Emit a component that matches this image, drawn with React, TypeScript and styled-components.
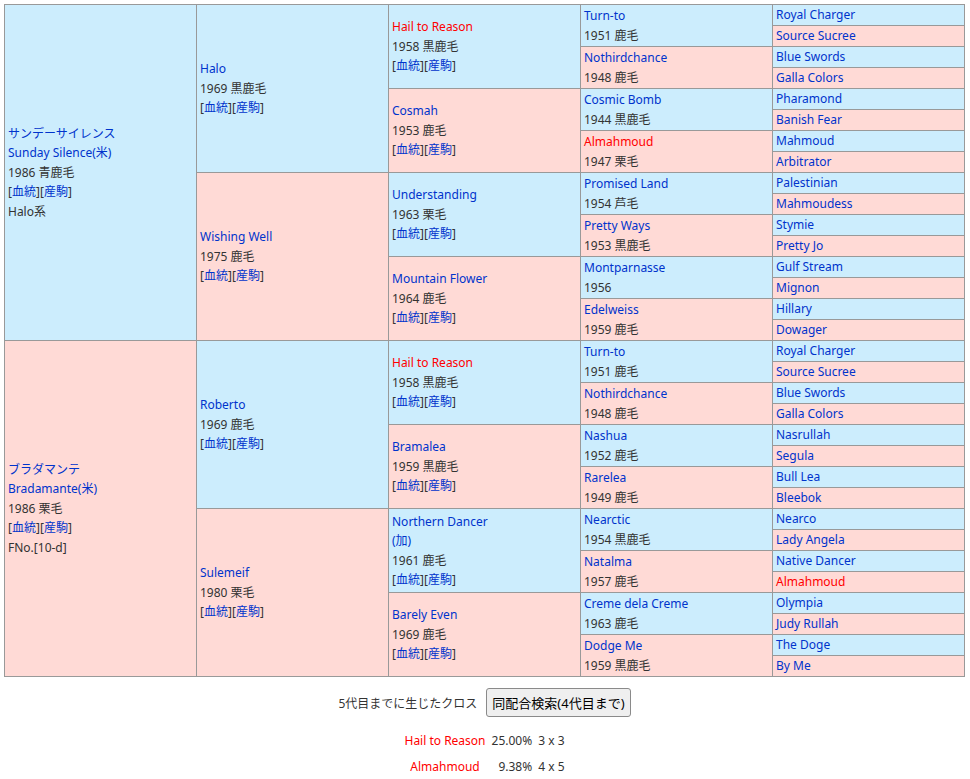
import React from 'react'
import styled, { createGlobalStyle } from 'styled-components'

const GlobalStyle = createGlobalStyle`
    body {
        margin: 0;
        background: #fff;
        color: #333;
        font-family: "Noto Sans", "Noto Sans CJK JP", sans-serif;
        font-size: 12px;
    }
`

const Page = styled.div`
    padding: 4px;
    width: 961px;
`

const PedigreeGrid = styled.div`
    display: grid;
    grid-template-columns: repeat(5, 191px);
    grid-template-rows: repeat(32, 20px);
    gap: 1px;
    padding: 1px;
    background: #999;
`

const Cell = styled.div<{ $col: number; $row: number; $span: number; $female: boolean }>`
    grid-column: ${p => p.$col};
    grid-row: ${p => p.$row} / span ${p => p.$span};
    background: ${p => (p.$female ? '#ffdad6' : '#ccedfd')};
    padding: 0 3px;
    display: flex;
    flex-direction: column;
    justify-content: center;
    line-height: 19.5px;
    white-space: nowrap;
    overflow: hidden;
`

const HorseLink = styled.a<{ $cross?: boolean }>`
    color: ${p => (p.$cross ? '#ff0000' : '#0033cc')};
    text-decoration: none;
`

const Line = styled.div`
    color: #333;
`

const SubLink = styled.a`
    color: #0033cc;
    text-decoration: none;
`

const CrossBar = styled.div`
    display: flex;
    justify-content: center;
    align-items: center;
    gap: 9px;
    margin-top: 11px;
    font-size: 12px;
    color: #333;
`

const SearchButton = styled.button`
    height: 29px;
    padding: 0 5px;
    font-family: "Noto Sans", "Noto Sans CJK JP", sans-serif;
    font-size: 13px;
    color: #000;
    background: #efefef;
    border: 1px solid #8a8a8a;
    border-radius: 3px;
`

const CrossTable = styled.table`
    margin: 10px auto 0;
    border-collapse: collapse;
    font-size: 12px;
`

const CrossCell = styled.td<{ $align: 'left' | 'center' | 'right' }>`
    height: 26px;
    padding: 0 3px;
    text-align: ${p => p.$align};
    color: #333;
    white-space: pre;
`

const CrossName = styled.span`
    color: #ff0000;
`

type Horse = {
    name: string
    kana?: string
    origin?: string
    year?: string
    coat?: string
    links?: boolean
    extra?: string
    cross?: boolean
}

const gen1: Horse[] = [
    { kana: 'サンデーサイレンス', name: 'Sunday Silence', origin: '(米)', year: '1986', coat: '青鹿毛', links: true, extra: 'Halo系' },
    { kana: 'ブラダマンテ', name: 'Bradamante', origin: '(米)', year: '1986', coat: '栗毛', links: true, extra: 'FNo.[10-d]' },
]

const gen2: Horse[] = [
    { name: 'Halo', year: '1969', coat: '黒鹿毛', links: true },
    { name: 'Wishing Well', year: '1975', coat: '鹿毛', links: true },
    { name: 'Roberto', year: '1969', coat: '鹿毛', links: true },
    { name: 'Sulemeif', year: '1980', coat: '栗毛', links: true },
]

const gen3: Horse[] = [
    { name: 'Hail to Reason', year: '1958', coat: '黒鹿毛', links: true, cross: true },
    { name: 'Cosmah', year: '1953', coat: '鹿毛', links: true },
    { name: 'Understanding', year: '1963', coat: '栗毛', links: true },
    { name: 'Mountain Flower', year: '1964', coat: '鹿毛', links: true },
    { name: 'Hail to Reason', year: '1958', coat: '黒鹿毛', links: true, cross: true },
    { name: 'Bramalea', year: '1959', coat: '黒鹿毛', links: true },
    { name: 'Northern Dancer', origin: '(加)', year: '1961', coat: '鹿毛', links: true },
    { name: 'Barely Even', year: '1969', coat: '鹿毛', links: true },
]

const gen4: Horse[] = [
    { name: 'Turn-to', year: '1951', coat: '鹿毛' },
    { name: 'Nothirdchance', year: '1948', coat: '鹿毛' },
    { name: 'Cosmic Bomb', year: '1944', coat: '黒鹿毛' },
    { name: 'Almahmoud', year: '1947', coat: '栗毛', cross: true },
    { name: 'Promised Land', year: '1954', coat: '芦毛' },
    { name: 'Pretty Ways', year: '1953', coat: '黒鹿毛' },
    { name: 'Montparnasse', year: '1956' },
    { name: 'Edelweiss', year: '1959', coat: '鹿毛' },
    { name: 'Turn-to', year: '1951', coat: '鹿毛' },
    { name: 'Nothirdchance', year: '1948', coat: '鹿毛' },
    { name: 'Nashua', year: '1952', coat: '鹿毛' },
    { name: 'Rarelea', year: '1949', coat: '鹿毛' },
    { name: 'Nearctic', year: '1954', coat: '黒鹿毛' },
    { name: 'Natalma', year: '1957', coat: '鹿毛' },
    { name: 'Creme dela Creme', year: '1963', coat: '鹿毛' },
    { name: 'Dodge Me', year: '1959', coat: '黒鹿毛' },
]

const gen5: Horse[] = [
    'Royal Charger', 'Source Sucree', 'Blue Swords', 'Galla Colors',
    'Pharamond', 'Banish Fear', 'Mahmoud', 'Arbitrator',
    'Palestinian', 'Mahmoudess', 'Stymie', 'Pretty Jo',
    'Gulf Stream', 'Mignon', 'Hillary', 'Dowager',
    'Royal Charger', 'Source Sucree', 'Blue Swords', 'Galla Colors',
    'Nasrullah', 'Segula', 'Bull Lea', 'Bleebok',
    'Nearco', 'Lady Angela', 'Native Dancer', 'Almahmoud',
    'Olympia', 'Judy Rullah', 'The Doge', 'By Me',
].map((name, i) => ({ name, cross: i === 27 }))

const generations = [gen1, gen2, gen3, gen4, gen5]

const crosses = [
    { name: 'Hail to Reason', pct: '25.00%', gen: '3 x 3' },
    { name: 'Almahmoud', pct: '9.38%', gen: '4 x 5' },
]

const HorseCell: React.FC<{ horse: Horse; col: number; index: number }> = ({ horse, col, index }) => {
    const span = 32 / Math.pow(2, col)
    const { kana, name, origin, year, coat, links, extra, cross } = horse
    return (
        <Cell $col={col} $row={index * span + 1} $span={span} $female={index % 2 === 1}>
            {kana && <HorseLink href="#">{kana}</HorseLink>}
            <div>
                <HorseLink href="#" $cross={cross}>{name}</HorseLink>
                {kana && origin && <HorseLink href="#">{origin}</HorseLink>}
            </div>
            {!kana && origin && <HorseLink href="#">{origin}</HorseLink>}
            {year && <Line>{year}{coat ? ` ${coat}` : ''}</Line>}
            {links && (
                <Line>
                    [<SubLink href="#">血統</SubLink>][<SubLink href="#">産駒</SubLink>]
                </Line>
            )}
            {extra && <Line>{extra}</Line>}
        </Cell>
    )
}

const App: React.FC = () => {
    return (
        <Page>
            <GlobalStyle />
            <PedigreeGrid>
                {generations.map((list, g) =>
                    list.map((horse, i) => (
                        <HorseCell key={`${g}-${i}`} horse={horse} col={g + 1} index={i} />
                    ))
                )}
            </PedigreeGrid>
            <CrossBar>
                <span>5代目までに生じたクロス</span>
                <SearchButton>同配合検索(4代目まで)</SearchButton>
            </CrossBar>
            <CrossTable>
                <tbody>
                    {crosses.map(c => (
                        <tr key={c.name}>
                            <CrossCell $align="center"><CrossName>{c.name}</CrossName></CrossCell>
                            <CrossCell $align="right">{c.pct}</CrossCell>
                            <CrossCell $align="left">{c.gen}</CrossCell>
                        </tr>
                    ))}
                </tbody>
            </CrossTable>
        </Page>
    )
}

export default App
